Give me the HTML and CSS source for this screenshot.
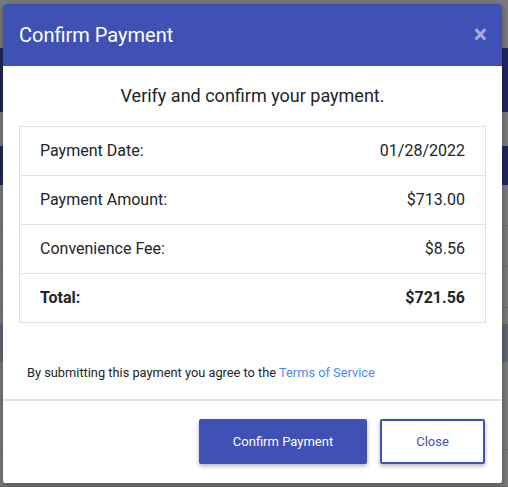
FILE: index.html
```html
<!DOCTYPE html>
<html>
<head>
<meta charset="utf-8">
<link rel="stylesheet" href="styles.css">
</head>
<body>
<div class="page">
  <div class="band grey h48"></div>
  <div class="band navy h64"></div>
  <div class="band grey h34"></div>
  <div class="band navy h39"></div>
  <div class="band grey h41 line"></div>
  <div class="band grey h41 line"></div>
  <div class="band grey h41 line"></div>
  <div class="band grey h16"></div>
  <div class="band slate h38"></div>
  <div class="band grey h38"></div>
  <div class="band grey h50 line"></div>
  <div class="band grey h37 line"></div>
</div>

<div class="modal">
  <div class="modal-header">
    <h2 class="modal-title">Confirm Payment</h2>
    <span class="close">&times;</span>
  </div>
  <div class="modal-body">
    <p class="lead">Verify and confirm your payment.</p>
    <div class="summary">
      <div class="row"><span>Payment Date:</span><span>01/28/2022</span></div>
      <div class="row"><span>Payment Amount:</span><span>$713.00</span></div>
      <div class="row"><span>Convenience Fee:</span><span>$8.56</span></div>
      <div class="row total"><span>Total:</span><span>$721.56</span></div>
    </div>
    <p class="terms">By submitting this payment you agree to the <a href="#">Terms of Service</a></p>
  </div>
  <div class="modal-footer">
    <button class="btn btn-primary">Confirm Payment</button>
    <button class="btn btn-outline">Close</button>
  </div>
</div>
</body>
</html>
```

FILE: styles.css
```css
html, body {
  margin: 0;
  padding: 0;
}
body {
  width: 508px;
  height: 487px;
  overflow: hidden;
  position: relative;
  background: #7a7a7a;
  font-family: Roboto, "Liberation Sans", sans-serif;
  color: #212529;
}
.page {
  display: flex;
  flex-direction: column;
}
.band { width: 100%; box-sizing: border-box; }
.grey { background: #7a7a7a; }
.navy { background: #1f285a; }
.slate { background: #5f6674; }
.line { border-bottom: 1px solid #6c6c6c; }
.h48 { height: 48px; }
.h64 { height: 64px; }
.h34 { height: 34px; }
.h39 { height: 39px; }
.h41 { height: 41px; }
.h16 { height: 16px; }
.h38 { height: 38px; }
.h50 { height: 50px; }
.h37 { height: 37px; }

.modal {
  position: absolute;
  top: 4px;
  left: 3px;
  width: 499px;
  background: #fff;
  border-radius: 2px;
  overflow: hidden;
  box-shadow: 0 2px 6px rgba(0,0,0,.35);
}
.modal-header {
  background: #3f51b5;
  height: 62px;
  box-sizing: border-box;
  padding: 18px 16px 0 16px;
  display: flex;
  justify-content: space-between;
  align-items: flex-start;
}
.modal-title {
  margin: 0;
  font-size: 20px;
  line-height: 26px;
  font-weight: 400;
  color: #fff;
}
.close {
  color: #a6aee0;
  font-size: 25px;
  line-height: 26px;
  font-weight: 700;
  margin-right: -1px;
}
.modal-body {
  padding: 16px 16px 16px;
}
.lead {
  margin: 0 0 17px;
  text-align: center;
  font-size: 18px;
  line-height: 27px;
}
.summary {
  border: 1px solid #e0e0e0;
}
.row {
  display: flex;
  justify-content: space-between;
  padding: 12px 20px;
  font-size: 16px;
  line-height: 24px;
  border-bottom: 1px solid #e0e0e0;
}
.row.total {
  border-bottom: none;
  font-weight: 700;
}
.terms {
  margin: 39px 0 0;
  padding-left: 8px;
  font-size: 12.8px;
  line-height: 21px;
}
.terms a {
  color: #4a8bef;
  text-decoration: none;
}
.modal-footer {
  border-top: 2px solid #e3e3e3;
  padding: 18px 17px 19px;
  display: flex;
  justify-content: flex-end;
  gap: 13px;
}
.btn {
  height: 45px;
  font-family: Roboto, "Liberation Sans", sans-serif;
  font-size: 13px;
  border-radius: 2px;
  box-shadow: 0 2px 4px rgba(0,0,0,.3);
  cursor: pointer;
}
.btn-primary {
  width: 168px;
  background: #3f51b5;
  color: #fff;
  border: none;
}
.btn-outline {
  width: 105px;
  background: #fff;
  color: #3f51b5;
  border: 2px solid #3f51b5;
}
```
